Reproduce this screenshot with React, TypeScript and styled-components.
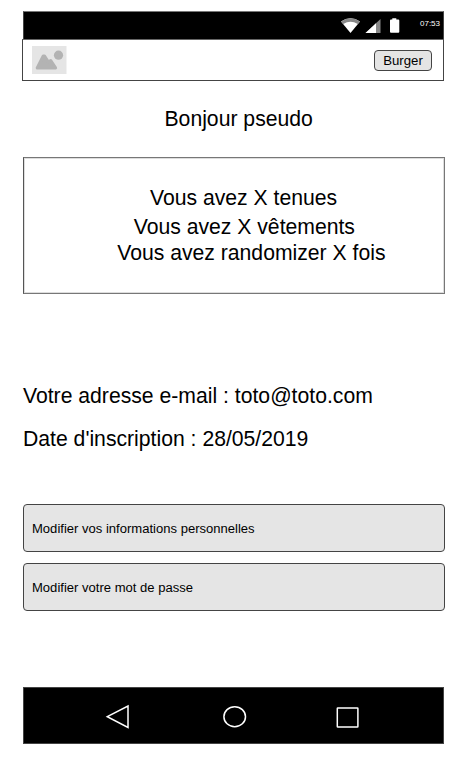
import React from "react";
import styled, { createGlobalStyle } from "styled-components";

const GlobalStyle = createGlobalStyle`
  * { box-sizing: border-box; }
  body {
    margin: 0;
    background: #fff;
    color: #000;
    font-family: "Liberation Sans", Arial, sans-serif;
  }
`;

const Screen = styled.main`
  display: flex;
  flex-direction: column;
  width: 461px;
  height: 760px;
  padding: 11px 16px 16px 23px;
  overflow: hidden;
`;

const StatusBar = styled.div`
  display: flex;
  flex: none;
  align-items: flex-start;
  width: 421px;
  height: 28px;
  padding-left: 317px;
  background: #000;
  border: 1px solid #444;
  border-top-color: #777;
  border-bottom: 0;
`;

const StatusIcons = styled.svg`
  display: block;
  flex: none;
  width: 62px;
  height: 27px;
`;

const Clock = styled.time`
  margin: 7px 0 0 17px;
  color: #fff;
  font-size: 8px;
  line-height: 10px;
  white-space: nowrap;
`;

const Header = styled.header`
  display: flex;
  flex: none;
  align-items: flex-start;
  justify-content: space-between;
  width: 422px;
  height: 42px;
  margin-left: -1px;
  padding: 5px 11px 0 9px;
  border: 1px solid #444;
  border-top-color: #666;
`;

const Logo = styled.svg`
  display: block;
  width: 35px;
  height: 30px;
`;

const BurgerButton = styled.button`
  width: 58px;
  height: 21px;
  margin-top: 5px;
  padding: 0;
  border: 1px solid #444;
  border-radius: 4px;
  background: #e4e4e4;
  color: #000;
  font: 13.2px/19px "Liberation Sans", Arial, sans-serif;
  text-align: center;
`;

const Line = styled.p<{ $top?: number; $left?: number }>`
  flex: none;
  height: 24px;
  margin: ${({ $top = 0 }) => $top}px 0 0 ${({ $left = 0 }) => $left}px;
  font-size: 21.18px;
  line-height: 24px;
  white-space: nowrap;
`;

const Stats = styled.section`
  flex: none;
  width: 422px;
  height: 137px;
  margin-top: 26px;
  padding-top: 27px;
  border: 1px solid #777;
  border-left-color: #555;
  box-shadow: inset 0 0 0 1px #ddd;
`;

const Actions = styled.div`
  display: flex;
  flex: none;
  flex-direction: column;
  gap: 11px;
  width: 422px;
  margin-top: 53px;
`;

const Action = styled.button`
  height: 48px;
  padding: 0 8px;
  border: 1px solid #444;
  border-radius: 4px;
  background: #e5e5e5;
  color: #000;
  font: 13.05px/15px "Liberation Sans", Arial, sans-serif;
  text-align: left;
`;

const NavBar = styled.nav`
  flex: none;
  width: 421px;
  height: 57px;
  margin-top: 76px;
  border: 1px solid #444;
  background: #000;
`;

const NavIcons = styled.svg`
  display: block;
  width: 419px;
  height: 55px;
`;

export default function App() {
  return (
    <>
      <GlobalStyle />
      <Screen>
        <StatusBar>
          <StatusIcons viewBox="341 12 62 27" aria-hidden="true">
            <path d="M341 21.5Q350.5 15 360 21.5L350.5 33Z" fill="#fff" />
            <path d="M341 21.5Q350.5 15 360 21.5L357.8 24Q350.5 19.5 343.2 24Z" fill="#888" />
            <path d="M380.5 19V33H365.5Z" fill="#888" />
            <path d="M376 23.2V33H365.5Z" fill="#fff" />
            <path d="M392.3 18.3h4v1.3h2q1 0 1 1v11.2q0 1-1 1h-7.3q-1 0-1-1V20.6q0-1 1-1h1.3Z" fill="#fff" />
          </StatusIcons>
          <Clock>07:53</Clock>
        </StatusBar>
        <Header>
          <Logo viewBox="32 45 35 30" aria-hidden="true">
            <rect x="32" y="46" width="34.5" height="28" fill="#e5e5e5" />
            <path
              d="M37.3 68L43.3 56H44.5L48.3 62L50.7 60.7L55.5 68Z"
              fill="#b3b3b3"
              stroke="#b3b3b3"
              strokeWidth="3.2"
              strokeLinejoin="round"
            />
            <circle cx="58.5" cy="55.2" r="4.6" fill="#b3b3b3" />
          </Logo>
          <BurgerButton type="button">Burger</BurgerButton>
        </Header>
        <Line $top={26} $left={141.5}>Bonjour pseudo</Line>
        <Stats>
          <Line $top={1} $left={126}>Vous avez X tenues</Line>
          <Line $top={5} $left={109.7}>Vous avez X vêtements</Line>
          <Line $top={2} $left={93.2}>Vous avez randomizer X fois</Line>
        </Stats>
        <Line $top={90}>Votre adresse e-mail : toto@toto.com</Line>
        <Line $top={19}>Date d'inscription : 28/05/2019</Line>
        <Actions>
          <Action type="button">Modifier vos informations personnelles</Action>
          <Action type="button">Modifier votre mot de passe</Action>
        </Actions>
        <NavBar aria-label="Navigation">
          <NavIcons viewBox="24 688 419 55" fill="none" stroke="#fff" strokeWidth="1.5" aria-hidden="true">
            <path d="M107.3 716.7L128 706V727.5Z" />
            <ellipse cx="234.7" cy="716.7" rx="10.8" ry="10" />
            <rect x="337.3" y="708" width="20.6" height="19" rx="0.5" />
          </NavIcons>
        </NavBar>
      </Screen>
    </>
  );
}
